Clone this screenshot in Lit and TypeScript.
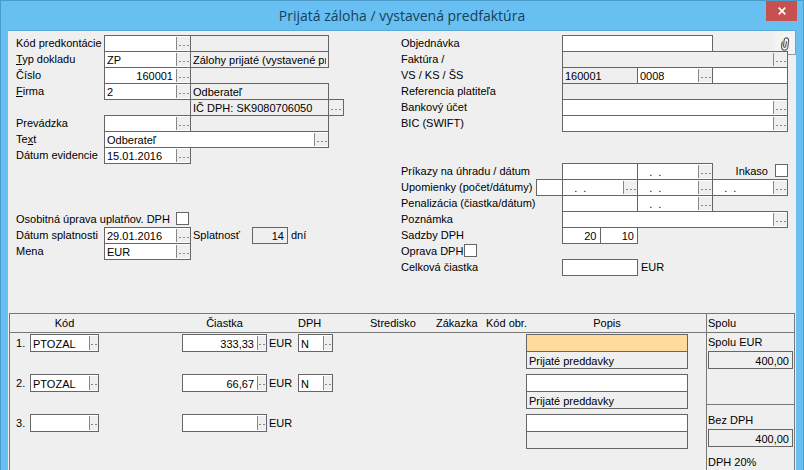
import { LitElement, html, css, svg, nothing } from "lit";
import { customElement } from "lit/decorators.js";
import { classMap } from "lit/directives/class-map.js";

interface FieldOptions {
  value?: string;
  locked?: boolean;
  right?: boolean;
  picker?: boolean;
  compact?: boolean;
  active?: boolean;
  size?: string;
}

interface Item {
  code: string;
  amount: string;
  vat: string;
  account: string;
}

const EMPTY_DATE = "\u00a0\u00a0\u00a0.\u00a0\u00a0.";

@customElement("app-root")
export class AppRoot extends LitElement {
  static styles = css`
    :host {
      display: flex;
      flex-direction: column;
      box-sizing: border-box;
      height: 100vh;
      overflow: hidden;
      padding: 0 8px;
      background: #67c0f1;
      border-top: 1px solid #4a9cca;
      box-shadow: inset 1px 0 #4a9cca, inset -1px 0 #4a9cca;
      font-family: "Liberation Sans", Arial, sans-serif;
      font-size: 11px;
      line-height: 16px;
      color: #000;
    }
    * {
      box-sizing: border-box;
    }
    .titlebar {
      position: relative;
      flex: none;
      height: 30px;
      border-bottom: 1px solid #5aa9d6;
    }
    h1 {
      margin: 0;
      text-align: center;
      font: 400 14px/29px "Open Sans", "Noto Sans", sans-serif;
      color: #17405c;
    }
    .close {
      position: absolute;
      top: 0;
      right: -1px;
      width: 31px;
      height: 20px;
      padding: 0;
      border: 0;
      background: #c75050;
      display: grid;
      place-items: center;
    }
    .body {
      position: relative;
      flex: 1;
      min-height: 0;
      display: flex;
      flex-direction: column;
      padding: 4px 1px 0;
      background: #efefef;
    }
    .attach {
      position: absolute;
      top: 0;
      right: 0;
      width: 22px;
      height: 24px;
      padding: 2px 0 0;
      border: solid #999;
      border-width: 0 1px 1px 0;
      background: #f3f3f3;
      display: grid;
      place-items: center;
    }
    .forms {
      position: relative;
      flex: none;
      display: grid;
      grid-template-columns: 385px 1fr;
      padding: 0 8px 38px 7px;
      pointer-events: none;
    }
    .forms * {
      pointer-events: auto;
    }
    .row {
      display: flex;
      height: 16px;
    }
    .gap-large {
      margin-top: 48px;
    }
    .gap {
      margin-top: 32px;
    }
    .row > label,
    .lead {
      flex: none;
      white-space: nowrap;
    }
    .left .row > label {
      width: 88px;
    }
    .right .row > label,
    .lead {
      width: 161px;
    }
    .left .row > label.wide {
      width: 160px;
    }
    .left .row > label.term {
      width: 62px;
      padding-left: 3px;
    }
    .unit {
      padding-left: 4px;
    }
    .lead {
      display: flex;
      justify-content: space-between;
    }
    .indent {
      padding-left: 174px;
    }
    .cells {
      flex: 1;
      display: grid;
      grid-template-columns: repeat(6, 1fr);
    }
    .s1 {
      grid-column: span 1;
    }
    .s2 {
      grid-column: span 2;
    }
    .s4 {
      grid-column: span 4;
    }
    .s6 {
      grid-column: span 6;
    }
    .field {
      display: flex;
      flex: none;
      height: 17px;
      margin-right: -1px;
      border: 1px solid #666;
      background: #fff;
    }
    .field.locked {
      background: #efefef;
    }
    .field.active {
      background: #ffdc9c;
    }
    .w-count {
      width: 27px;
    }
    .w-days {
      width: 36px;
    }
    .w-code {
      width: 87px;
    }
    .w-name {
      width: 139px;
    }
    .w-text {
      width: 225px;
    }
    .field input {
      flex: 1;
      width: 0;
      min-width: 0;
      height: 100%;
      margin: 0;
      padding: 1px 2px 0;
      border: 0;
      outline: 0;
      background: transparent;
      font: inherit;
      line-height: 14px;
      color: inherit;
    }
    .field.end input {
      text-align: right;
      padding-right: 3px;
    }
    .picker {
      flex: none;
      display: flex;
      align-items: flex-start;
      width: 14px;
      margin: 1px 0;
      padding: 8px 0 0 2px;
      border: 0;
      border-left: 1px solid #888;
      background: #efefef;
    }
    .compact .picker {
      width: 9px;
      padding-left: 1px;
    }
    .field.outer {
      width: 16px;
    }
    .outer .picker {
      border-left: 0;
    }
    .check {
      flex: none;
      appearance: none;
      width: 13px;
      height: 13px;
      margin: 1px 0 0;
      border: 1px solid #666;
      background: #fff;
    }
    .right .row > label.tight {
      width: 63px;
    }
    .inkaso {
      display: flex;
      justify-content: flex-end;
      gap: 7px;
      margin-right: -1px;
    }
    .sheet {
      flex: 1;
      min-height: 0;
      display: grid;
      grid-template-columns: 1fr 88px;
      border: solid #777;
      border-width: 1px 1px 0;
    }
    table {
      width: 100%;
      border-spacing: 0;
      table-layout: fixed;
      align-self: start;
    }
    th,
    td {
      padding: 0;
      font-weight: 400;
      text-align: left;
      vertical-align: top;
      white-space: nowrap;
    }
    thead th {
      height: 19px;
      border-bottom: 1px solid #777;
      line-height: 18px;
    }
    tbody tr {
      height: 40px;
    }
    tbody th,
    tbody td {
      padding-top: 1px;
      line-height: 18px;
    }
    tbody th {
      padding-left: 6px;
    }
    .c-no {
      width: 20px;
    }
    .c-code {
      width: 152px;
    }
    .c-amount {
      width: 116px;
    }
    .c-vat {
      width: 72px;
    }
    .c-centre {
      width: 66px;
    }
    .c-order {
      width: 50px;
    }
    .c-img {
      width: 40px;
    }
    .over-code,
    .over-amount,
    .over-note {
      display: block;
      text-align: center;
    }
    .over-code,
    .w-item {
      width: 69px;
    }
    .over-amount,
    .w-amount {
      width: 85px;
    }
    .w-vat {
      width: 35px;
    }
    .over-note,
    .note {
      margin-right: 18px;
    }
    .sheet .field {
      height: 18px;
      margin: 0;
    }
    .note .field + .field {
      margin-top: -1px;
    }
    .amount {
      display: flex;
      gap: 2px;
    }
    .totals {
      border-left: 1px solid #777;
      display: flex;
      flex-direction: column;
    }
    .totals h2 {
      flex: none;
      margin: 0;
      height: 19px;
      padding-left: 1px;
      border-bottom: 1px solid #777;
      font: inherit;
      line-height: 18px;
    }
    .total {
      flex: none;
      padding: 0 1px;
    }
    .total label {
      display: block;
      line-height: 18px;
    }
    .total.first {
      height: 72px;
      border-bottom: 1px solid #777;
    }
    .total.net {
      height: 49px;
      padding-top: 6px;
    }
  `;

  private dots(width: number) {
    return html`<svg width=${width} height="1" viewBox="0 0 ${width} 1" aria-hidden="true">
      ${svg`<path d="M0 .5H${width}" stroke="#888" stroke-dasharray="2 2" />`}
    </svg>`;
  }

  private picker(width = 10) {
    return html`<button class="picker" type="button" aria-label="Vybrať">${this.dots(width)}</button>`;
  }

  private field(id: string, name: string | null, o: FieldOptions = {}) {
    const classes = {
      field: true,
      locked: !!o.locked,
      end: !!o.right,
      compact: !!o.compact,
      active: !!o.active,
      [o.size ?? "s6"]: true,
    };
    return html`<div class=${classMap(classes)}>
      <input id=${id} type="text" aria-label=${name ?? nothing} .value=${o.value ?? ""} ?readonly=${o.locked} />
      ${o.picker ? this.picker(o.compact ? 6 : 10) : nothing}
    </div>`;
  }

  private renderLeft() {
    const code = { size: "w-code", picker: true };
    const name = { size: "w-name", locked: true };
    return html`<section class="left">
      <div class="row">
        <label for="predk">Kód predkontácie</label>
        ${this.field("predk", null, code)} ${this.field("predk-n", "Názov predkontácie", name)}
      </div>
      <div class="row">
        <label for="typ"><u>T</u>yp dokladu</label>
        ${this.field("typ", null, { ...code, value: "ZP" })}
        ${this.field("typ-n", "Názov typu", { ...name, value: "Zálohy prijaté (vystavené pre" })}
      </div>
      <div class="row">
        <label for="cislo">Číslo</label>
        ${this.field("cislo", null, { ...code, value: "160001", right: true })}
      </div>
      <div class="row">
        <label for="firma"><u>F</u>irma</label>
        ${this.field("firma", null, { ...code, value: "2" })}
        ${this.field("firma-n", "Názov firmy", { ...name, value: "Odberateľ" })}
      </div>
      <div class="row indent">
        ${this.field("icdph", "IČ DPH", { ...name, value: "IČ DPH: SK9080706050" })}
        <div class="field locked outer">${this.picker()}</div>
      </div>
      <div class="row">
        <label for="prev">Prevádzka</label>
        ${this.field("prev", null, code)} ${this.field("prev-n", "Názov prevádzky", name)}
      </div>
      <div class="row">
        <label for="text">Te<u>x</u>t</label>
        ${this.field("text", null, { size: "w-text", picker: true, value: "Odberateľ" })}
      </div>
      <div class="row">
        <label for="evid">Dátum evidencie</label>
        ${this.field("evid", null, { ...code, value: "15.01.2016" })}
      </div>
      <div class="row gap-large">
        <label class="wide" for="osob">Osobitná úprava uplatňov. DPH</label>
        <input class="check" id="osob" type="checkbox" />
      </div>
      <div class="row">
        <label for="splat">Dátum splatnosti</label>
        ${this.field("splat", null, { ...code, value: "29.01.2016" })}
        <label class="term" for="dni">Splatnosť</label>
        ${this.field("dni", null, { size: "w-days", locked: true, right: true, value: "14" })}
        <span class="unit">dní</span>
      </div>
      <div class="row">
        <label for="mena">Mena</label>
        ${this.field("mena", null, { ...code, value: "EUR" })}
      </div>
    </section>`;
  }

  private renderRight() {
    const date = { size: "s2", picker: true, value: EMPTY_DATE };
    return html`<section class="right">
      <div class="row">
        <label for="obj">Objednávka</label>
        <div class="cells">${this.field("obj", null, { size: "s4" })}</div>
      </div>
      <div class="row">
        <label for="fakt">Faktúra /</label>
        <div class="cells">${this.field("fakt", null, { locked: true, picker: true })}</div>
      </div>
      <div class="row">
        <label for="vs">VS / KS / ŠS</label>
        <div class="cells">
          ${this.field("vs", null, { size: "s2", locked: true, value: "160001" })}
          ${this.field("ks", "KS", { size: "s2", picker: true, value: "0008" })}
          ${this.field("ss", "ŠS", { size: "s2" })}
        </div>
      </div>
      <div class="row">
        <label for="ref">Referencia platiteľa</label>
        <div class="cells">${this.field("ref", null, { locked: true })}</div>
      </div>
      <div class="row">
        <label for="ucet">Bankový účet</label>
        <div class="cells">${this.field("ucet", null, { picker: true })}</div>
      </div>
      <div class="row">
        <label for="bic">BIC (SWIFT)</label>
        <div class="cells">${this.field("bic", null, { picker: true })}</div>
      </div>
      <div class="row gap">
        <label for="prik">Príkazy na úhradu / dátum</label>
        <div class="cells">
          ${this.field("prik", null, { size: "s2" })} ${this.field("prik-d", "Dátum príkazu", date)}
          <div class="s2 inkaso">
            <label for="ink">Inkaso</label>
            <input class="check" id="ink" type="checkbox" />
          </div>
        </div>
      </div>
      <div class="row">
        <div class="lead">
          <label for="upom">Upomienky (počet/dátumy)</label>
          ${this.field("upom", null, { size: "w-count" })}
        </div>
        <div class="cells">
          ${["1", "2", "3"].map((n) => this.field(`upom-${n}`, `Dátum upomienky ${n}`, date))}
        </div>
      </div>
      <div class="row">
        <label for="penal">Penalizácia (čiastka/dátum)</label>
        <div class="cells">
          ${this.field("penal", null, { size: "s2" })} ${this.field("penal-d", "Dátum penalizácie", date)}
        </div>
      </div>
      <div class="row">
        <label for="pozn">Poznámka</label>
        <div class="cells">${this.field("pozn", null, { picker: true })}</div>
      </div>
      <div class="row">
        <label for="sadz">Sadzby DPH</label>
        <div class="cells">
          ${this.field("sadz", null, { size: "s1", right: true, value: "20" })}
          ${this.field("sadz-2", "Znížená sadzba DPH", { size: "s1", right: true, value: "10" })}
        </div>
      </div>
      <div class="row">
        <label class="tight" for="oprava">Oprava DPH</label>
        <input class="check" id="oprava" type="checkbox" />
      </div>
      <div class="row">
        <label for="celk">Celková čiastka</label>
        <div class="cells">
          ${this.field("celk", null, { size: "s2" })}
          <span class="unit">EUR</span>
        </div>
      </div>
    </section>`;
  }

  private items: Item[] = [
    { code: "PTOZAL", amount: "333,33", vat: "N", account: "Prijaté preddavky" },
    { code: "PTOZAL", amount: "66,67", vat: "N", account: "Prijaté preddavky" },
    { code: "", amount: "", vat: "", account: "" },
  ];

  private renderItem(item: Item, i: number) {
    const n = i + 1;
    const pick = { picker: true, compact: true };
    return html`<tr>
      <th scope="row">${n}.</th>
      <td>${this.field(`kod-${n}`, `Kód ${n}`, { ...pick, size: "w-item", value: item.code })}</td>
      <td>
        <div class="amount">
          ${this.field(`suma-${n}`, `Čiastka ${n}`, { ...pick, size: "w-amount", right: true, value: item.amount })}
          <span>EUR</span>
        </div>
      </td>
      <td>${item.vat ? this.field(`dph-${n}`, `DPH ${n}`, { ...pick, size: "w-vat", value: item.vat }) : nothing}</td>
      <td></td>
      <td></td>
      <td></td>
      <td>
        <div class="note">
          ${this.field(`popis-${n}`, `Popis ${n}`, { active: i === 0 })}
          ${this.field(`ucet-${n}`, `Účet ${n}`, { locked: true, value: item.account })}
        </div>
      </td>
    </tr>`;
  }

  render() {
    return html`
      <header class="titlebar">
        <h1>Prijatá záloha / vystavená predfaktúra</h1>
        <button class="close" type="button" aria-label="Zavrieť">
          <svg width="8" height="8" viewBox="0 0 8 8"><path d="M.7 .7L7.3 7.3M7.3 .7L.7 7.3" stroke="#fff" stroke-width="1.7" /></svg>
        </button>
      </header>
      <main class="body">
        <button class="attach" type="button" aria-label="Prílohy">
          <svg width="10" height="14" viewBox="0 0 10 14" fill="none" stroke-linecap="round">
            <path d="M2.6 4.200L1.800 8.500" stroke="#d9a95c" stroke-width="1.200" />
            <path d="M2 5.500L1.600 10Q1.700 13 4.400 13.200Q7.400 13.200 7.900 10L8.600 4Q8.700 1 6.600 .8Q4.500 .8 4.100 3.500L3.600 8.500Q3.600 10.400 4.700 10.400Q5.700 10.300 5.900 8.500L6.400 4.500" stroke="#4d5560" stroke-width="1.100" />
          </svg>
        </button>
        <div class="forms">${this.renderLeft()} ${this.renderRight()}</div>
        <div class="sheet">
          <table>
            <thead>
              <tr>
                <th class="c-no"></th>
                <th class="c-code" scope="col"><span class="over-code">Kód</span></th>
                <th class="c-amount" scope="col"><span class="over-amount">Čiastka</span></th>
                <th class="c-vat" scope="col">DPH</th>
                <th class="c-centre" scope="col">Stredisko</th>
                <th class="c-order" scope="col">Zákazka</th>
                <th class="c-img" scope="col">Kód obr.</th>
                <th scope="col"><span class="over-note">Popis</span></th>
              </tr>
            </thead>
            <tbody>
              ${this.items.map((item, i) => this.renderItem(item, i))}
            </tbody>
          </table>
          <aside class="totals">
            <h2>Spolu</h2>
            <div class="total first">
              <label for="spolu">Spolu EUR</label>
              ${this.field("spolu", null, { locked: true, right: true, value: "400,00" })}
            </div>
            <div class="total net">
              <label for="bez">Bez DPH</label>
              ${this.field("bez", null, { locked: true, right: true, value: "400,00" })}
            </div>
            <div class="total">DPH 20%</div>
          </aside>
        </div>
      </main>
    `;
  }
}
